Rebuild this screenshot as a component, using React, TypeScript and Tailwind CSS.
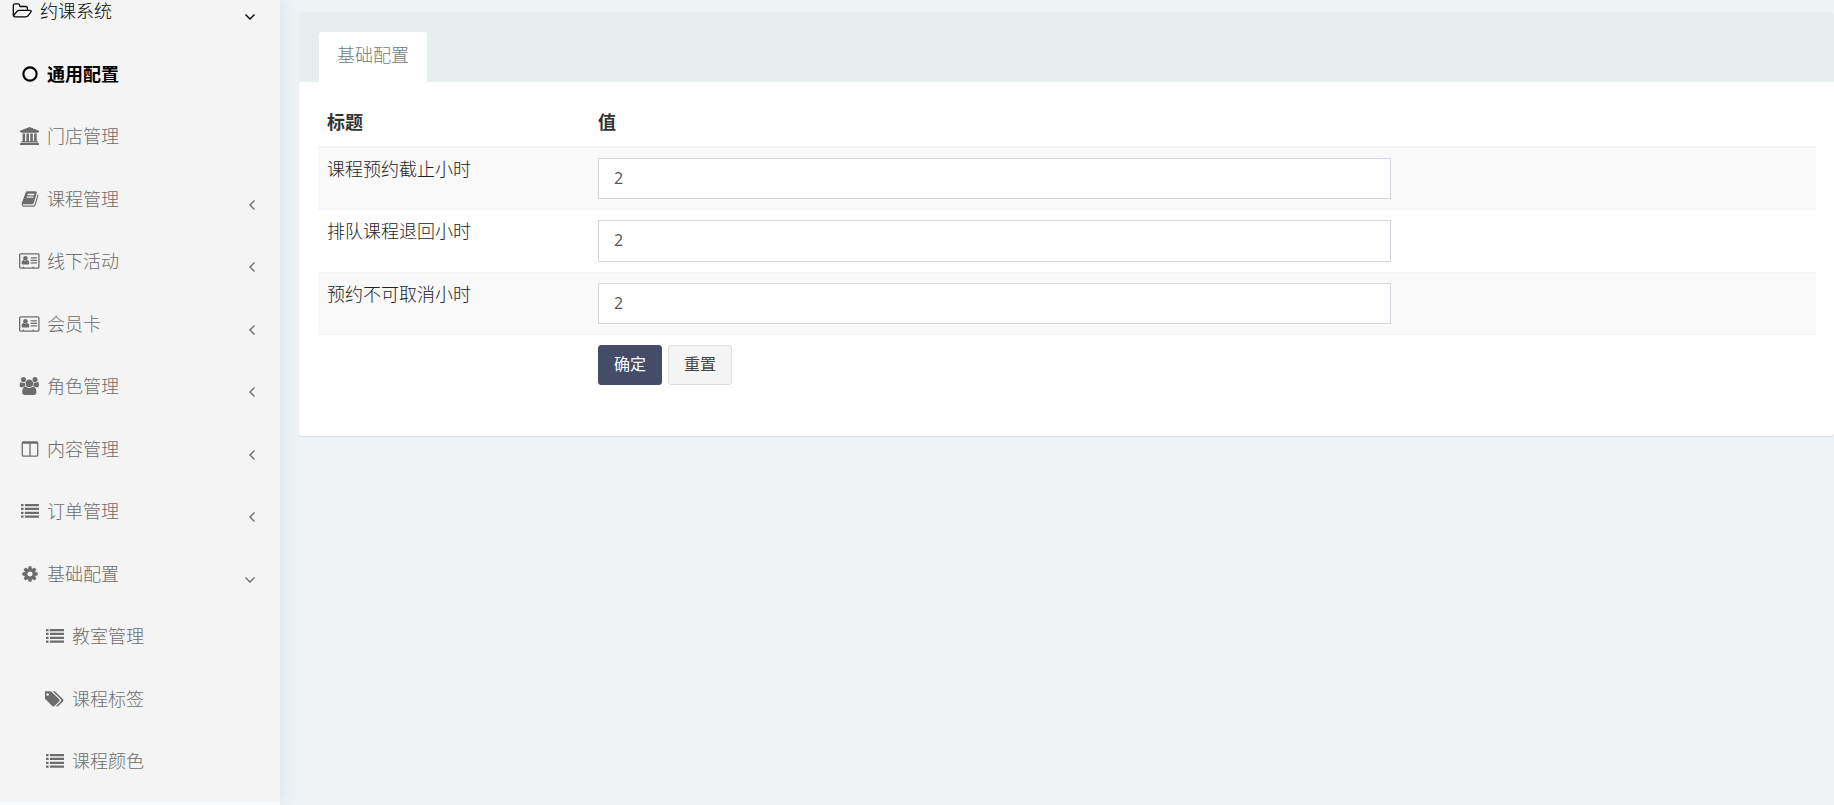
import React, { useState } from 'react';

type IconName =
  | 'folder'
  | 'circle'
  | 'bank'
  | 'book'
  | 'card'
  | 'users'
  | 'columns'
  | 'list'
  | 'gear'
  | 'tags';

const glyphs: Record<IconName, { width: number; body: React.ReactNode }> = {
  folder: {
    width: 2048,
    body: (
      <path d="M1845 931q0-35-53-35h-1088q-40 0-85.500 21.500t-71.500 52.500l-294 363q-18 24-18 40 0 35 53 35h1088q40 0 86-22t71-53l294-363q18-22 18-39zm-1141-163h768v-160q0-40-28-68t-68-28h-576q-40 0-68-28t-28-68v-64q0-40-28-68t-68-28h-320q-40 0-68 28t-28 68v853l256-315q44-53 116-87.500t140-34.500zm1269 163q0 62-46 120l-295 363q-43 53-116 87.500t-140 34.500h-1088q-92 0-158-66t-66-158v-960q0-92 66-158t158-66h320q92 0 158 66t66 158v32h544q92 0 158 66t66 158v160h192q54 0 99 24.500t67 70.500q15 32 15 68z" />
    ),
  },
  circle: {
    width: 1792,
    body: <circle cx="896" cy="896" r="660" fill="none" stroke="currentColor" strokeWidth="215" />,
  },
  bank: {
    width: 1920,
    body: (
      <path d="M960 0l960 384v128h-128q0 26-20.500 45t-48.500 19h-1526q-28 0-48.500-19t-20.500-45h-128v-128zm-704 640h256v768h128v-768h256v768h128v-768h256v768h128v-768h256v768h59q28 0 48.500 19t20.500 45v64h-1664v-64q0-26 20.500-45t48.500-19h59v-768zm1595 960q28 0 48.500 19t20.500 45v128h-1920v-128q0-26 20.500-45t48.500-19h1782z" />
    ),
  },
  book: {
    width: 1792,
    body: (
      <path d="M1703 478q40 57 18 129l-275 906q-19 64-76.500 107.500t-122.500 43.500h-923q-77 0-148.500-53.500t-99.500-131.500q-24-67-2-127 0-4 3-27t4-37q1-8-3-21.500t-3-19.500q2-11 8-21t16.500-23.500 16.500-23.500q23-38 45-91.500t30-91.500q3-10 .5-30t-.5-28q3-11 17-28t17-23q21-36 42-92t25-90q1-9-2.500-32t.5-28q4-13 22-30.500t22-22.500q19-26 42.500-84.500t27.500-96.500q1-8-3-25.500t-2-26.500q2-8 9-18t18-23 17-21q8-12 16.500-30.500t15-35 16-36 19.500-32 26.500-23.500 36-11.500 47.500 5.500l-1 3q38-9 51-9h761q74 0 114 56t18 130l-274 906q-36 119-71.500 153.500t-128.500 34.500h-869q-27 0-38 15-11 16-1 43 24 70 144 70h923q29 0 56-15.500t35-41.500l300-987q7-22 5-57 38 15 59 43zm-1064 2q-4 13 2 22.500t20 9.500h608q13 0 25.500-9.500t16.500-22.500l21-64q4-13-2-22.500t-20-9.500h-608q-13 0-25.500 9.500t-16.500 22.500zm-83 256q-4 13 2 22.500t20 9.500h608q13 0 25.500-9.500t16.500-22.500l21-64q4-13-2-22.500t-20-9.500h-608q-13 0-25.500 9.500t-16.500 22.500z" />
    ),
  },
  card: {
    width: 2048,
    body: (
      <>
        <path
          fillRule="evenodd"
          d="M160 128h1728q66 0 113 47t47 113v1216q0 66-47 113t-113 47h-1728q-66 0-113-47t-47-113v-1216q0-66 47-113t113-47zM160 256q-32 0-32 32v1216q0 32 32 32h224v-64q0-32 32-32h64q32 0 32 32v64h832v-64q0-32 32-32h64q32 0 32 32v64h416q32 0 32-32v-1216q0-32-32-32z"
        />
        <circle cx="640" cy="620" r="225" />
        <path d="M470 800q170 120 340 0 214 20 214 300 0 150-120 150h-528q-120 0-120-150 0-280 214-300z" />
        <rect x="1152" y="512" width="640" height="128" rx="32" />
        <rect x="1152" y="768" width="640" height="128" rx="32" />
        <rect x="1152" y="1024" width="640" height="128" rx="32" />
      </>
    ),
  },
  users: {
    width: 2048,
    body: (
      <path d="M657 896q-162 5-265 128h-134q-82 0-138-40.500t-56-118.500q0-353 124-353 6 0 43.500 21t97.500 42.500 119 21.500q67 0 133-23-5 37-5 66 0 159 81 288zm1071 637q0 120-73 189.500t-194 69.500h-874q-121 0-194-69.500t-73-189.500q0-53 3.500-103.500t14-109 26.500-108.500 43-97.500 62-81 85.500-53.500 111.500-20q10 0 43 21.500t73 48 107 48 135 21.500 135-21.500 107-48 73-48 43-21.500q61 0 111.500 20t85.500 53.500 62 81 43 97.500 26.500 108.500 14 109 3.500 103.500zm-1024-1277q0 106-75 181t-181 75-181-75-75-181 75-181 181-75 181 75 75 181zm704 384q0 159-112.500 271.500t-271.500 112.500-271.500-112.500-112.500-271.500 112.500-271.500 271.500-112.500 271.500 112.500 112.500 271.500zm576 225q0 78-56 118.500t-138 40.500h-134q-103-123-265-128 81-129 81-288 0-29-5-66 66 23 133 23 59 0 119-21.500t97.500-42.500 43.500-21q124 0 124 353zm-128-609q0 106-75 181t-181 75-181-75-75-181 75-181 181-75 181 75 75 181z" />
    ),
  },
  columns: {
    width: 1792,
    body: (
      <path
        fillRule="evenodd"
        d="M224 128h1344q66 0 113 47t47 113v1216q0 66-47 113t-113 47h-1344q-66 0-113-47t-47-113v-1216q0-66 47-113t113-47zM192 384v1120q0 32 32 32h608v-1152zM960 384v1152h608q32 0 32-32v-1120z"
      />
    ),
  },
  list: {
    width: 1792,
    body: (
      <>
        {[192, 576, 960, 1344].map((y) => (
          <React.Fragment key={y}>
            <rect x="0" y={y} width="256" height="224" rx="32" />
            <rect x="384" y={y} width="1408" height="224" rx="32" />
          </React.Fragment>
        ))}
      </>
    ),
  },
  gear: {
    width: 1792,
    body: (
      <path d="M1152 896q0-106-75-181t-181-75-181 75-75 181 75 181 181 75 181-75 75-181zm512-109v222q0 12-8 23t-20 13l-185 28q-19 54-39 91 35 50 107 138 10 12 10 25t-9 23q-27 37-99 108t-94 71q-12 0-26-9l-138-108q-44 23-91 38-16 136-29 186-7 28-36 28h-222q-14 0-24.500-8.500t-11.500-21.500l-28-184q-49-16-90-37l-141 107q-10 9-25 9-14 0-25-11-126-114-165-168-7-10-7-23 0-12 8-23 15-21 51-66.500t54-70.500q-27-50-41-99l-183-27q-13-2-21-12.500t-8-23.500v-222q0-12 8-23t19-13l186-28q14-46 39-92-40-57-107-138-10-12-10-24 0-10 9-23 26-36 98.500-107.500t94.500-71.500q13 0 26 10l138 107q44-23 91-38 16-136 29-186 7-28 36-28h222q14 0 24.500 8.500t11.500 21.500l28 184q49 16 90 37l142-107q9-9 24-9 13 0 25 10 129 119 165 170 7 8 7 22 0 12-8 23-15 21-51 66.500t-54 70.500q26 50 41 98l183 28q13 2 21 12.500t8 23.500z" />
    ),
  },
  tags: {
    width: 1920,
    body: (
      <path d="M384 448q0-53-37.500-90.500t-90.500-37.500-90.500 37.500-37.500 90.500 37.500 90.500 90.500 37.500 90.500-37.500 37.500-90.500zm1067 576q0 53-37 90l-491 492q-39 37-91 37-53 0-90-37l-715-716q-38-37-64.500-101t-26.500-117v-416q0-52 38-90t90-38h416q53 0 117 26.500t102 64.500l715 714q37 39 37 91zm384 0q0 53-37 90l-491 492q-39 37-91 37-36 0-59-14t-53-45l470-470q37-37 37-90 0-52-37-91l-715-714q-38-38-102-64.500t-117-26.500h224q53 0 117 26.500t102 64.500l715 714q37 39 37 91z" />
    ),
  },
};

function Icon({ name }: { name: IconName }) {
  const glyph = glyphs[name];
  return (
    <span className="flex w-[23px] shrink-0 justify-center" aria-hidden="true">
      <svg viewBox={`0 0 ${glyph.width} 1792`} className="h-[18px] w-auto" fill="currentColor">
        {glyph.body}
      </svg>
    </span>
  );
}

function Angle({ open }: { open: boolean }) {
  return (
    <svg
      viewBox="0 0 12 10"
      className="mt-3 h-[10px] w-3"
      fill="none"
      stroke="currentColor"
      strokeWidth="1.4"
      aria-hidden="true"
    >
      <polyline points={open ? '1.5,2.500 6,7 10.5,2.500' : '10.5,0.5 6,5 10.5,9.500'} />
    </svg>
  );
}

interface Item {
  label: string;
  icon: IconName;
  level: 0 | 1 | 2;
  arrow?: 'open' | 'closed';
  tone?: 'parent' | 'current';
}

const items: Item[] = [
  { label: '约课系统', icon: 'folder', level: 0, arrow: 'open', tone: 'parent' },
  { label: '通用配置', icon: 'circle', level: 1, tone: 'current' },
  { label: '门店管理', icon: 'bank', level: 1 },
  { label: '课程管理', icon: 'book', level: 1, arrow: 'closed' },
  { label: '线下活动', icon: 'card', level: 1, arrow: 'closed' },
  { label: '会员卡', icon: 'card', level: 1, arrow: 'closed' },
  { label: '角色管理', icon: 'users', level: 1, arrow: 'closed' },
  { label: '内容管理', icon: 'columns', level: 1, arrow: 'closed' },
  { label: '订单管理', icon: 'list', level: 1, arrow: 'closed' },
  { label: '基础配置', icon: 'gear', level: 1, arrow: 'open' },
  { label: '教室管理', icon: 'list', level: 2 },
  { label: '课程标签', icon: 'tags', level: 2 },
  { label: '课程颜色', icon: 'list', level: 2 },
];

const indent = ['pl-[11px]', 'pl-[18px]', 'pl-[43px]'];

function Sidebar() {
  return (
    <aside className="w-[280px] shrink-0 bg-[#f9fafc] shadow-[0_0_20px_rgba(60,80,100,0.12)]">
      <nav className="bg-[#f4f4f4] pb-[9px]">
        <ul>
          {items.map((item, i) => (
            <li key={item.label}>
              <a
                href="#"
                className={`flex items-center gap-[6px] pr-[24px] pb-5 text-lg leading-tight ${i === 0 ? '' : 'pt-5'} ${indent[item.level]} ${
                  item.tone === 'current'
                    ? 'font-bold text-black'
                    : item.tone === 'parent'
                      ? 'font-light text-black'
                      : 'font-light text-[#6c6c6c]'
                }`}
              >
                <Icon name={item.icon} />
                <span className="flex-1">{item.label}</span>
                {item.arrow && <Angle open={item.arrow === 'open'} />}
              </a>
            </li>
          ))}
        </ul>
      </nav>
    </aside>
  );
}

const initialFields = [
  { id: 'deadline', label: '课程预约截止小时', value: '2' },
  { id: 'refund', label: '排队课程退回小时', value: '2' },
  { id: 'lock', label: '预约不可取消小时', value: '2' },
];

function ConfigPanel() {
  const [fields, setFields] = useState(initialFields);
  const change = (id: string, value: string) =>
    setFields(fields.map((f) => (f.id === id ? { ...f, value } : f)));

  return (
    <section className="rounded-[3px] bg-white shadow-[0_1px_1px_rgba(0,0,0,0.08)]">
      <div role="tablist" className="flex rounded-t-[3px] bg-[#e8edf0] px-5 pt-5">
        <button
          type="button"
          role="tab"
          aria-selected="true"
          className="rounded-t-[3px] bg-white px-[18px] pt-[11px] pb-[14px] text-lg leading-[25px] font-light text-[#6c7b7c]"
        >
          基础配置
        </button>
      </div>
      <form className="pt-[19px] pr-[18px] pb-[41px] pl-[19px]" onSubmit={(e) => e.preventDefault()}>
        <table className="w-full table-fixed border-collapse text-left text-lg leading-[25px] text-[#333333]">
          <thead>
            <tr>
              <th className="w-[271px] px-[9px] pt-[9px] pb-[11px]">标题</th>
              <th className="px-[9px] pt-[9px] pb-[11px]">值</th>
            </tr>
          </thead>
          <tbody>
            {fields.map((f, i) => (
              <tr
                key={f.id}
                className={`border-[#f4f4f4] odd:bg-[#f9f9f9] ${i === 0 ? 'border-t-2' : 'border-t'}`}
              >
                <td className="px-[9px] pt-[9px] pb-[10px] align-top font-light text-[#222222]">
                  <label htmlFor={f.id}>{f.label}</label>
                </td>
                <td className="px-[9px] py-[10px]">
                  <input
                    id={f.id}
                    type="text"
                    value={f.value}
                    onChange={(e) => change(f.id, e.target.value)}
                    className="block w-full max-w-[793px] border border-[#d2d6de] bg-white px-[15px] pt-2 pb-[9px] text-base leading-[1.4] text-[#555555] outline-none"
                  />
                </td>
              </tr>
            ))}
            <tr className="border-t border-[#f4f4f4]">
              <td />
              <td className="px-[9px] py-[10px]">
                <div className="flex gap-[6px] text-base leading-[22px]">
                  <button
                    type="submit"
                    className="rounded-[3px] border border-[#444c69] bg-[#444c69] px-[15px] pt-[7px] pb-[9px] text-white"
                  >
                    确定
                  </button>
                  <button
                    type="reset"
                    className="rounded-[3px] border border-[#dddddd] bg-[#f4f4f4] px-[15px] pt-[7px] pb-[9px] text-[#444444]"
                    onClick={() => setFields(initialFields)}
                  >
                    重置
                  </button>
                </div>
              </td>
            </tr>
          </tbody>
        </table>
      </form>
    </section>
  );
}

export default function App() {
  return (
    <div className="flex min-h-screen bg-[#eff3f6] font-['Open_Sans','Noto_Sans_CJK_SC',sans-serif]">
      <Sidebar />
      <main className="min-w-0 flex-1 pt-3 pl-[19px]">
        <ConfigPanel />
      </main>
    </div>
  );
}
